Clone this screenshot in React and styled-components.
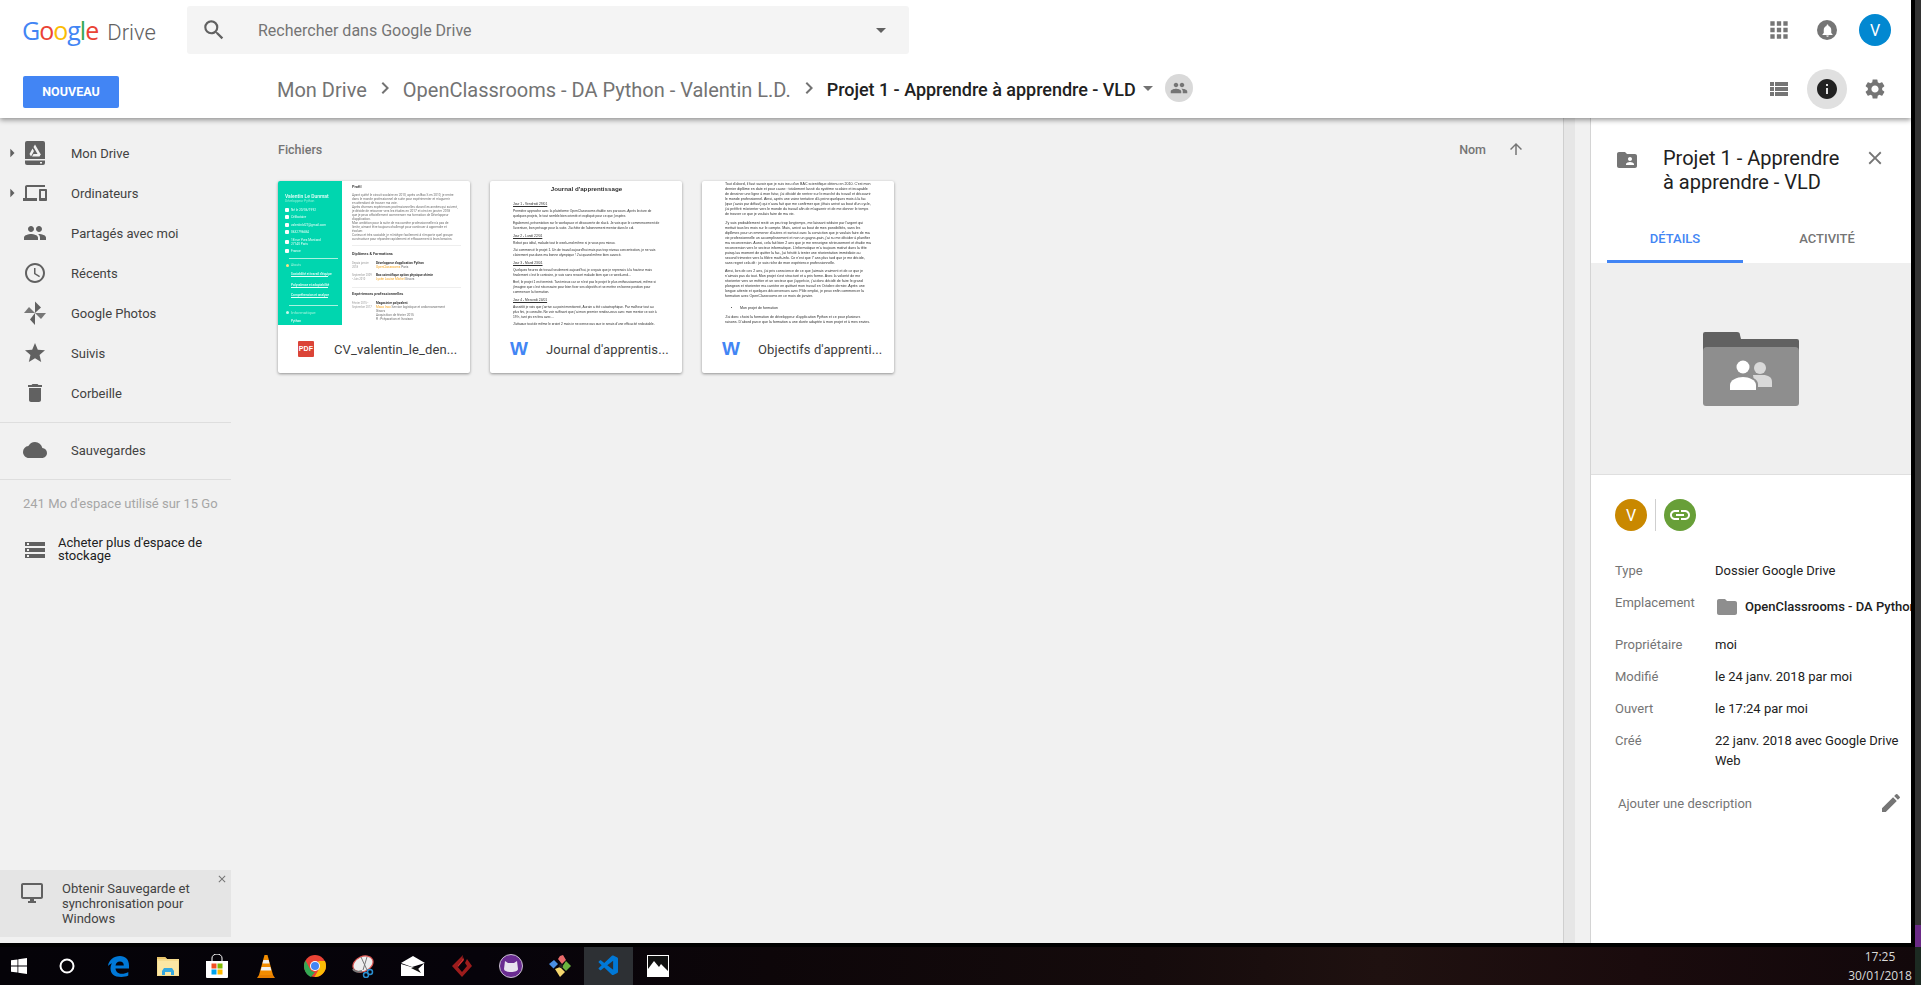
import React from "react";
import styled, { createGlobalStyle } from "styled-components";
import {
  MdSearch,
  MdArrowDropDown,
  MdPeople,
  MdApps,
  MdNotifications,
  MdViewList,
  MdInfo,
  MdSettings,
  MdClose,
  MdEdit,
  MdFolderShared,
  MdLink,
  MdFolder,
  MdAccessTime,
  MdStar,
  MdDelete,
  MdCloud,
  MdStorage,
  MdOutlineDesktopWindows,
  MdDevices,
  MdChevronRight,
  MdArrowUpward,
  MdArrowRight,
} from "react-icons/md";
import { VscVscode } from "react-icons/vsc";

const GlobalStyle = createGlobalStyle`
  html, body {
    margin: 0;
    padding: 0;
    background: #000;
    font-family: Roboto, "Liberation Sans", sans-serif;
  }
  * {
    box-sizing: border-box;
  }
`;

/* --- little drawings that no icon package has --- */

const DriveDiskIcon = () => (
  <svg width="20" height="24" viewBox="0 0 20 24">
    <path d="M2 0h16a2 2 0 0 1 2 2v16H0V2a2 2 0 0 1 2-2z" fill="#616161" />
    <path d="M0 19.5h20V22a2 2 0 0 1-2 2H2a2 2 0 0 1-2-2z" fill="#616161" />
    <rect x="15" y="21" width="2" height="1.5" fill="#f1f1f1" />
    <path d="M10 3.5l5.5 9.5h-3l-4-7z" fill="#f1f1f1" />
    <path d="M7.5 7.5L4.5 13l1.5 2.5 3-5.5z" fill="#f1f1f1" />
    <path d="M7 15.5h7.5L16 13H8.5z" fill="#f1f1f1" />
  </svg>
);

const PhotosIcon = () => (
  <svg width="22" height="24" viewBox="0 0 22 24" fill="#616161">
    <path d="M11 0.5l6 6-6 5.5z" />
    <path d="M22 12l-5 6-6-6z" opacity="0.85" />
    <path d="M11 24l-5-5.500 5-6.500z" />
    <path d="M0 12l5-6 6 6z" opacity="0.85" />
  </svg>
);

const FolderPreview = () => (
  <svg width="96" height="74" viewBox="0 0 96 74">
    <path d="M2 0h32c2 0 3 1 3 3l1 4h56a2 2 0 0 1 2 2v30H0V2a2 2 0 0 1 2-2z" fill="#616161" />
    <path d="M4 15h88a4 4 0 0 1 4 4v52a3 3 0 0 1-3 3H3a3 3 0 0 1-3-3V19a4 4 0 0 1 4-4z" fill="#8e8e8e" />
    <circle cx="57" cy="36" r="6" fill="#d9d9d9" />
    <path d="M50 43h10c5 0 9 2 9 7v5H52z" fill="#d9d9d9" />
    <path d="M25 60v-8c0-5 8-8.500 15-8.500s15 3.500 15 8.500v8z" fill="#8e8e8e" />
    <circle cx="40" cy="35" r="6.500" fill="#fff" />
    <path d="M27 58v-5c0-5 7-8 13-8s13 3 13 8v5z" fill="#fff" />
  </svg>
);

const WindowsLogo = () => (
  <svg width="16" height="16" viewBox="0 0 16 16" fill="#fff">
    <path d="M0 2.300l6.500-.9v6.200H0zM7.300 1.300L16 0v7.600H7.300zM0 8.400h6.500v6.200L0 13.700zM7.300 8.400H16V16l-8.700-1.200z" />
  </svg>
);

const CortanaRing = () => (
  <svg width="16" height="16" viewBox="0 0 16 16">
    <circle cx="8" cy="8" r="6.500" fill="none" stroke="#fff" strokeWidth="2" />
  </svg>
);

const EdgeLogo = () => (
  <svg width="21" height="21" viewBox="0 0 21 21">
    <path
      d="M0 10C.6 4 6 0 12 0c5.500 0 9 3.500 9 9.500v3H7.500c.3 3.500 3 5.300 6.300 5.300 2.300 0 4.700-.6 6.500-1.800v3.600c-1.900 1-4.400 1.400-7 1.400C6 21 2.500 17.500 2.500 12.500c0-2 .5-3.800 1.500-5.200C2.500 8 1 9 0 10zM7.500 9.500h8.300c0-2.500-1.500-4-3.900-4-2.300 0-3.900 1.600-4.400 4z"
      fill="#0078d7"
    />
  </svg>
);

const ExplorerLogo = () => (
  <svg width="22" height="20" viewBox="0 0 22 20">
    <path d="M0 1h8l2 2h12v17H0z" fill="#f6dc8f" />
    <path d="M0 1h8l2 2H0z" fill="#e9c46a" />
    <rect x="1" y="5" width="20" height="14" fill="#fbe7a4" />
    <path d="M5 19v-4l2-3h8l2 3v4h-3v-3H8v3z" fill="#35a9e0" />
  </svg>
);

const StoreLogo = () => (
  <svg width="24" height="24" viewBox="0 0 24 24">
    <path d="M7 7V4a5 4 0 0 1 10 0v3" fill="none" stroke="#fff" strokeWidth="1" />
    <path d="M1 7h22v16a1 1 0 0 1-1 1H2a1 1 0 0 1-1-1z" fill="#fff" />
    <rect x="6.500" y="9.500" width="5" height="5" fill="#f25022" />
    <rect x="12.500" y="9.500" width="5" height="5" fill="#7fba00" />
    <rect x="6.500" y="15.500" width="5" height="5" fill="#00a4ef" />
    <rect x="12.500" y="15.500" width="5" height="5" fill="#ffb900" />
  </svg>
);

const VlcLogo = () => (
  <svg width="20" height="23" viewBox="0 0 20 23">
    <path d="M1 23l2-3h14l2 3z" fill="#e67e00" />
    <path d="M3 20L8.500 0h3L17 20z" fill="#f28c00" />
    <path d="M7.300 5h5.400l.8 3.500H6.500zM5.600 12h8.800l.9 3.500H4.700z" fill="#f2f2f2" />
  </svg>
);

const ChromeLogo = () => (
  <svg width="22" height="22" viewBox="0 0 22 22">
    <circle cx="11" cy="11" r="11" fill="#ea4335" />
    <path d="M1.500 5.500L6 14c1 2 3 3 5 3l-4 5C3 20.500 0 16 0 11c0-2 .5-4 1.500-5.500z" fill="#34a853" />
    <path d="M11 6h10c.7 1.500 1 3.200 1 5 0 6-5 11-11 11h-.5L15 14c1-2 .8-5.500-1-8z" fill="#fbbc05" />
    <circle cx="11" cy="11" r="5" fill="#fff" />
    <circle cx="11" cy="11" r="4" fill="#4285f4" />
  </svg>
);

const SnipLogo = () => (
  <svg width="24" height="24" viewBox="0 0 24 24">
    <ellipse cx="11" cy="10" rx="10.500" ry="7.500" transform="rotate(-25 11 10)" fill="#eee" stroke="#d9534f" strokeWidth="1.200" />
    <path d="M1 15c2 3 6 3 9 2" fill="none" stroke="#777" strokeWidth="2" />
    <path d="M9 3l6 13M15 3l-4 13" stroke="#777" strokeWidth="1" />
    <circle cx="18" cy="18" r="2.500" fill="none" stroke="#2a8fd0" strokeWidth="1.500" />
    <circle cx="14" cy="21" r="2.500" fill="none" stroke="#2a8fd0" strokeWidth="1.500" />
  </svg>
);

const MailLogo = () => (
  <svg width="24" height="20" viewBox="0 0 24 20">
    <path d="M0 7L12 0l12 7-13 4z" fill="#fff" />
    <path d="M0 8l17 5 6-5.500V20H0z" fill="#fff" />
    <path d="M10 12l10 5-4-6z" fill="#111" />
  </svg>
);

const RedLogo = () => (
  <svg width="20" height="22" viewBox="0 0 20 22">
    <path d="M11 0l-1 5-5 6 5 6 5-6-2-3 2-4 5 7-10 11L0 11z" fill="#9c1c1c" />
    <path d="M11 2l-1 3-5 6 1 1 6-7z" fill="#d32f2f" />
  </svg>
);

const PurpleLogo = () => (
  <svg width="24" height="24" viewBox="0 0 24 24">
    <circle cx="12" cy="12" r="11.500" fill="#6a2c91" stroke="#c9c2d0" strokeWidth="1" />
    <path d="M6 7l3 2h6l3-2 1 8c0 2-3 3-7 3s-7-1-7-3z" fill="#e8e3ee" />
  </svg>
);

const DiamondsLogo = () => (
  <svg width="24" height="24" viewBox="0 0 24 24">
    <path d="M6 6l4 4-4.500 4.500L1 10z" fill="#4a90e2" />
    <path d="M12 2l3-1 3 5-4 4-4-5z" fill="#e96a6a" />
    <path d="M18 7l5 5-5 5-4-4z" fill="#6cb33f" />
    <path d="M7 15l5-2 5 5-5 5z" fill="#f5d76e" />
    <circle cx="13" cy="12" r="2" fill="#222" />
  </svg>
);

const PhotoLogo = () => (
  <svg width="22" height="22" viewBox="0 0 22 22">
    <rect x="0.500" y="0.500" width="21" height="21" fill="#111" stroke="#fff" />
    <path d="M1 21V14l6-8 5 6 2-3 7 7v5z" fill="#fff" />
  </svg>
);

/* --- page frame --- */

const Page = styled.div`
  width: 1921px;
  height: 985px;
  display: flex;
  flex-direction: column;
  overflow: hidden;
  background: #000;
`;

const Desktop = styled.div`
  height: 947px;
  display: flex;
`;

const Window = styled.div`
  width: 1911px;
  height: 943px;
  display: flex;
  flex-direction: column;
  background: #f1f1f1;
`;

const Wallpaper = styled.div`
  width: 6px;
  height: 947px;
  margin-left: 4px;
  background: linear-gradient(180deg, #333 0, #333 925px, #6a2a86 925px);
`;

/* --- header --- */

const Header = styled.header`
  height: 118px;
  flex: none;
  background: #fff;
  box-shadow: 0 2px 5px rgba(0, 0, 0, 0.4);
  position: relative;
  z-index: 2;
`;

const HeaderRow = styled.div`
  height: ${(p) => p.$height}px;
  display: flex;
  align-items: center;
  padding-right: 12px;
`;

const Logo = styled.div`
  width: 187px;
  padding-left: 22px;
  flex: none;
  display: flex;
  align-items: baseline;
  white-space: nowrap;
`;

const GoogleWord = styled.span`
  font-family: "Open Sans", Roboto, sans-serif;
  font-size: 25px;
  letter-spacing: -1px;
  line-height: 32px;
`;

const LogoLetter = styled.span`
  color: ${(p) => p.$color};
`;

const DriveWord = styled.span`
  margin-left: 9px;
  font-size: 22px;
  font-weight: 300;
  color: #616161;
`;

const SearchBox = styled.div`
  width: 722px;
  height: 48px;
  flex: none;
  display: flex;
  align-items: center;
  background: #f4f4f4;
  border-radius: 3px;
  color: #616161;
  padding: 0 16px 0 14px;
`;

const SearchText = styled.span`
  flex: 1;
  margin-left: 31px;
  font-size: 16px;
  color: #757575;
`;

const IconGroup = styled.div`
  margin-left: auto;
  display: flex;
`;

const IconSlot = styled.div`
  width: 48px;
  height: 48px;
  display: flex;
  align-items: center;
  justify-content: center;
  color: ${(p) => p.$color || "#757575"};
`;

const Bell = styled.div`
  width: 20px;
  height: 20px;
  border-radius: 50%;
  background: #757575;
  color: #fff;
  display: flex;
  align-items: center;
  justify-content: center;
`;

const Avatar = styled.div`
  width: 32px;
  height: 32px;
  border-radius: 50%;
  background: ${(p) => p.$bg};
  color: #fff;
  font-size: 16px;
  display: flex;
  align-items: center;
  justify-content: center;
`;

const InfoHalo = styled.div`
  width: 40px;
  height: 40px;
  border-radius: 50%;
  background: #e0e0e0;
  color: #212121;
  display: flex;
  align-items: center;
  justify-content: center;
`;

const ActionArea = styled.div`
  width: 277px;
  flex: none;
  padding-left: 23px;
  padding-top: 5px;
`;

const NewButton = styled.button`
  width: 96px;
  height: 32px;
  border: 0;
  border-radius: 2px;
  background: #4285f4;
  color: #fff;
  font-family: Roboto, sans-serif;
  font-size: 12.500px;
  font-weight: 700;
  display: block;
`;

const Breadcrumb = styled.nav`
  display: flex;
  align-items: center;
  gap: 6px;
  color: #737373;
  white-space: nowrap;
  margin-top: -2px;
`;

const Crumb = styled.span`
  font-size: 20px;
  margin-top: 3px;
`;

const CurrentCrumb = styled.span`
  font-size: 18px;
  font-weight: 500;
  letter-spacing: -0.03px;
  color: #212121;
  margin-top: 3px;
`;

const CrumbMenu = styled.span`
  display: flex;
  margin-left: -6px;
`;

const SharedBadge = styled.div`
  width: 28px;
  height: 28px;
  margin-left: -1px;
  border-radius: 50%;
  background: #d9d9d9;
  color: #757575;
  display: flex;
  align-items: center;
  justify-content: center;
`;

/* --- body --- */

const Body = styled.div`
  flex: 1;
  min-height: 0;
  display: flex;
`;

const Sidebar = styled.aside`
  width: 231px;
  flex: none;
  padding-top: 15px;
  display: flex;
  flex-direction: column;
`;

const NavRow = styled.div`
  height: 40px;
  flex: none;
  display: flex;
  align-items: center;
  font-size: 13px;
  color: #424242;
`;

const TreeArrow = styled.span`
  width: 23px;
  flex: none;
  display: flex;
  justify-content: center;
  color: #616161;
`;

const NavIcon = styled.span`
  width: 24px;
  height: 24px;
  flex: none;
  margin-right: 24px;
  display: flex;
  align-items: center;
  justify-content: center;
  color: #616161;
`;

const Divider = styled.div`
  height: 1px;
  flex: none;
  margin: ${(p) => p.$margin};
  background: #dedede;
`;

const Quota = styled.div`
  padding-left: 23px;
  margin-top: 15px;
  font-size: 13px;
  line-height: 18px;
  color: #a6a6a6;
  white-space: nowrap;
`;

const StorageLink = styled.div`
  margin-top: 22px;
  display: flex;
  align-items: center;
  padding-left: 23px;
  font-size: 13px;
  line-height: 13px;
  color: #212121;
`;

const StorageIcon = styled.span`
  width: 24px;
  flex: none;
  margin: 3px 11px 0 0;
  display: flex;
  color: #616161;
`;

const Promo = styled.div`
  margin-top: auto;
  margin-bottom: 6px;
  height: 67px;
  flex: none;
  background: #e5e5e5;
  display: flex;
  padding: 11px 0 0 20px;
  position: relative;
  font-size: 13px;
  line-height: 15px;
  color: #424242;
`;

const PromoIcon = styled.span`
  width: 24px;
  flex: none;
  margin-right: 18px;
  display: flex;
  color: #616161;
`;

const PromoClose = styled.span`
  position: absolute;
  top: 3px;
  right: 3px;
  display: flex;
  color: #757575;
`;

const Main = styled.main`
  flex: 1;
  min-width: 0;
  padding: 19px 38px 0 47px;
`;

const ListHead = styled.div`
  height: 24px;
  display: flex;
  align-items: center;
  font-size: 12.500px;
  font-weight: 500;
  color: #757575;
`;

const SortBy = styled.div`
  margin-left: auto;
  display: flex;
  align-items: center;
  gap: 21px;
`;

const Cards = styled.div`
  margin-top: 20px;
  display: flex;
  gap: 20px;
`;

const Card = styled.article`
  width: 192px;
  height: 192px;
  background: #fff;
  border-radius: 2px;
  box-shadow: 0 1px 3px rgba(0, 0, 0, 0.4);
  overflow: hidden;
`;

const Thumb = styled.div`
  height: 144px;
  overflow: hidden;
  display: flex;
  filter: blur(0.25px);
`;

const CardLabel = styled.div`
  height: 48px;
  display: flex;
  align-items: center;
  padding-left: 20px;
  font-size: 13px;
  font-weight: 400;
  letter-spacing: 0.1px;
  color: #3c3c3c;
  white-space: nowrap;
`;

const FileBadge = styled.span`
  width: 16px;
  height: 16px;
  flex: none;
  margin-right: 20px;
  border-radius: 1px;
  background: ${(p) => (p.$pdf ? "#db4437" : "transparent")};
  color: ${(p) => (p.$pdf ? "#fff" : "#4285f4")};
  font-size: ${(p) => (p.$pdf ? "7px" : "19px")};
  font-weight: 900;
  line-height: 16px;
  text-align: center;
  font-family: "Liberation Sans", sans-serif;
`;

/* --- fake document thumbnails, tiny but real text --- */

const CvSide = styled.div`
  width: 64px;
  flex: none;
  background: #00d6af;
  color: #e8fff9;
  padding: 12px 4px 0 7px;
  font-size: 3.200px;
  line-height: 4px;
`;

const CvName = styled.div`
  font-size: 5px;
  font-weight: 500;
  line-height: 6px;
  white-space: nowrap;
`;

const CvRole = styled.div`
  font-size: 3.300px;
  color: #8ff0d8;
  margin-bottom: 4.500px;
`;

const CvLine = styled.div`
  display: flex;
  align-items: center;
  gap: 2px;
  margin-top: 3.500px;
  white-space: nowrap;
  &::before {
    content: "";
    width: 4px;
    height: 4px;
    flex: none;
    border-radius: 1px;
    background: #fff;
  }
`;

const CvAddress = styled.span`
  white-space: normal;
`;

const CvSection = styled.div`
  margin: 4px 0 -1.500px 0;
  padding-left: 1px;
  color: #9df3dc;
  font-size: ${(p) => p.$size || 3.400}px;
  line-height: 5px;
  display: flex;
  align-items: center;
  gap: 2px;
  &::before {
    content: "";
    width: 3px;
    height: 3px;
    flex: none;
    border-radius: 50%;
    background: ${(p) => p.$dot};
  }
`;

const CvSkill = styled.div`
  margin: 5.500px 10px 0 6px;
  border-bottom: ${(p) => (p.$plain ? "0" : "0.800px solid #e8fff9")};
  font-weight: 500;
  white-space: nowrap;
`;

const CvRule = styled.div`
  height: 1px;
  margin: ${(p) => p.$gap || 5}px 0 0 4px;
  background: #a8f2df;
`;

const CvMain = styled.div`
  flex: 1;
  min-width: 0;
  padding: 3px 9px 0 10px;
  color: #6e6e6e;
  font-size: 3.200px;
  line-height: 4px;
  white-space: nowrap;
`;

const CvHeading = styled.div`
  color: #444;
  font-weight: 700;
  font-size: 3.900px;
  line-height: 6px;
  margin-bottom: ${(p) => p.$after || 0}px;
`;

const CvSeparator = styled.div`
  height: 1px;
  margin: ${(p) => p.$margin};
  background: #eee;
`;

const CvEntry = styled.div`
  display: flex;
  gap: 3px;
  margin-top: 4px;
`;

const CvDate = styled.div`
  width: 21px;
  flex: none;
  color: #999;
  font-size: 2.700px;
  white-space: normal;
`;

const CvStrong = styled.div`
  color: #333;
  font-weight: 700;
`;

const CvOrange = styled.span`
  color: #f5a623;
`;

const DocPage = styled.div`
  flex: 1;
  padding: ${(p) => p.$padding};
  color: #2e2e2e;
  font-family: "Liberation Sans", sans-serif;
  font-size: ${(p) => p.$size}px;
  line-height: 5px;
  min-width: 0;
`;

const DocTitle = styled.div`
  font-size: 6.200px;
  font-weight: 700;
  text-align: center;
  line-height: 9px;
  margin: 3px 0 8.500px;
  white-space: nowrap;
`;

const DocHead = styled.div`
  text-decoration: underline;
  margin-bottom: 2px;
`;

const DocPara = styled.p`
  margin: 0 0 ${(p) => p.$gap || 2.500}px;
`;

const DocBullet = styled.div`
  margin: 7px 0 4px 15px;
  display: list-item;
  list-style: disc;
`;

/* --- details panel --- */

const Scroller = styled.div`
  width: 27px;
  flex: none;
  border-left: 1px solid #cfcfcf;
  background: linear-gradient(90deg, #e6e6e6 0, #e6e6e6 11px, #f1f1f1 11px);
`;

const Panel = styled.section`
  width: 321px;
  flex: none;
  background: #fff;
  border-left: 1px solid #d4d4d4;
  overflow: hidden;
`;

const PanelHead = styled.div`
  height: 97px;
  padding: 28px 24px 0;
  display: flex;
  align-items: flex-start;
  color: #757575;
`;

const PanelIcon = styled.span`
  width: 24px;
  height: 24px;
  margin: 2px 24px 0 0;
  flex: none;
  display: flex;
`;

const PanelTitle = styled.h2`
  width: 190px;
  margin: 0;
  font-size: 20px;
  font-weight: 400;
  line-height: 24px;
  color: #212121;
`;

const PanelClose = styled.span`
  margin-left: auto;
  width: 24px;
  height: 24px;
  flex: none;
  display: flex;
  align-items: center;
  justify-content: center;
`;

const Tabs = styled.div`
  display: flex;
  gap: 16px;
  padding: 0 16px;
`;

const Tab = styled.div`
  width: 136px;
  height: 48px;
  padding-top: 1px;
  border-bottom: 3px solid ${(p) => (p.$active ? "#4285f4" : "transparent")};
  display: flex;
  align-items: center;
  justify-content: center;
  font-size: 13px;
  font-weight: 500;
  color: ${(p) => (p.$active ? "#4285f4" : "#757575")};
`;

const Preview = styled.div`
  height: 212px;
  background: #efefef;
  border-bottom: 1px solid #dfdfdf;
  display: flex;
  align-items: center;
  justify-content: center;
`;

const Sharing = styled.div`
  display: flex;
  align-items: center;
  padding: 24px 0 0 24px;
`;

const Separator = styled.div`
  width: 1px;
  height: 32px;
  margin: 0 8px;
  background: #cfcfcf;
`;

const DetailList = styled.div`
  padding: 30px 8px 0 24px;
  display: flex;
  flex-direction: column;
  gap: 12px;
  font-size: 13px;
  line-height: 20px;
`;

const DetailRow = styled.div`
  display: flex;
  min-height: ${(p) => p.$minHeight || 20}px;
`;

const DetailLabel = styled.div`
  width: 100px;
  flex: none;
  color: #757575;
`;

const DetailValue = styled.div`
  color: #212121;
`;

const LocationValue = styled.div`
  display: flex;
  align-items: center;
  height: 20px;
  margin-top: 4px;
  color: #212121;
  font-weight: 500;
  white-space: nowrap;
`;

const LocationIcon = styled.span`
  display: flex;
  margin: 0 6px 0 0;
  color: #8e8e8e;
`;

const DescriptionRow = styled.div`
  margin-top: 22px;
  padding: 0 8px 0 27px;
  height: 20px;
  display: flex;
  align-items: center;
  justify-content: space-between;
  font-size: 13px;
  color: #757575;
`;

/* --- taskbar --- */

const Taskbar = styled.footer`
  height: 38px;
  flex: none;
  display: flex;
  align-items: stretch;
  background: linear-gradient(
    90deg,
    #050308 0,
    #06030a 480px,
    #0d0609 770px,
    #150b0c 1150px,
    #1f1110 1380px,
    #1a0b0d 1640px,
    #12080b 1915px,
    #1c2a22 1915px
  );
`;

const TaskSlot = styled.div`
  width: ${(p) => p.$width || 49}px;
  margin-left: ${(p) => p.$offset || 0}px;
  display: flex;
  align-items: center;
  justify-content: center;
  background: ${(p) => (p.$active ? "#2d3034" : "transparent")};
  color: #0078d7;
`;

const Clock = styled.div`
  margin-left: auto;
  width: 70px;
  margin-right: 6px;
  display: flex;
  flex-direction: column;
  justify-content: center;
  align-items: center;
  color: #d9d9d9;
  font-family: "Open Sans", sans-serif;
  font-size: 12px;
  line-height: 19px;
  white-space: nowrap;
`;

const navItems = [
  { label: "Mon Drive", icon: <DriveDiskIcon />, tree: true },
  { label: "Ordinateurs", icon: <MdDevices size={24} />, tree: true },
  { label: "Partagés avec moi", icon: <MdPeople size={24} /> },
  { label: "Récents", icon: <MdAccessTime size={26} /> },
  { label: "Google Photos", icon: <PhotosIcon /> },
  { label: "Suivis", icon: <MdStar size={24} /> },
  { label: "Corbeille", icon: <MdDelete size={24} /> },
];

const details = [
  { label: "Propriétaire", value: "moi" },
  { label: "Modifié", value: "le 24 janv. 2018 par moi" },
  { label: "Ouvert", value: "le 17:24 par moi" },
  { label: "Créé", value: "22 janv. 2018 avec Google Drive Web" },
];

const taskIcons = [
  <EdgeLogo />,
  <ExplorerLogo />,
  <StoreLogo />,
  <VlcLogo />,
  <ChromeLogo />,
  <SnipLogo />,
  <MailLogo />,
  <RedLogo />,
  <PurpleLogo />,
  <DiamondsLogo />,
];

const CvThumb = () => (
  <Thumb>
    <CvSide>
      <CvName>Valentin Le Dunmat</CvName>
      <CvRole>Développeur Python</CvRole>
      <CvLine>Né le 20/06/1992</CvLine>
      <CvLine>Célibataire</CvLine>
      <CvLine>valentinld27@gmail.com</CvLine>
      <CvLine>0632796684</CvLine>
      <CvLine>
        <CvAddress>
          18 rue Yves Montand
          <br />
          27140 Paris
        </CvAddress>
      </CvLine>
      <CvLine>France</CvLine>
      <CvRule />
      <CvSection $dot="#ffe082">Atouts</CvSection>
      <CvSkill>Sociabilité et travail d'équipe</CvSkill>
      <CvSkill>Polyvalence et adaptabilité</CvSkill>
      <CvSkill>Compréhension et analyse</CvSkill>
      <CvRule $gap={7} />
      <CvSection $dot="#c8f7ea" $size={4.300}>Informatique</CvSection>
      <CvSkill $plain>Python</CvSkill>
    </CvSide>
    <CvMain>
      <CvHeading $after={3}>Profil</CvHeading>
      Ayant quitté le circuit scolaire en 2010, après un Bac S en 2010, je rentre
      <br />
      dans le monde professionnel de suite pour expérimenter et m'aguerrir
      <br />
      en attendant de trouver ma voie.
      <br />
      Après diverses expériences professionnelles durant les années qui suivent,
      <br />
      je décide de retourner vers les études en 2017 et c'est en janvier 2018
      <br />
      que je peux officiellement commencer ma formation de Développeur
      <br />
      d'application.
      <br />
      Mon ambition pour la suite de ma carrière professionnelle n'a pas de
      <br />
      limite, aimant être toujours challengé pour continuer à apprendre et
      <br />
      évoluer.
      <br />
      Curieux et très sociable, je m'intègre facilement à n'importe quel groupe
      <br />
      ou structure pour répondre rapidement et efficacement à leurs besoins.
      <CvSeparator $margin="4px 0 5px" />
      <CvHeading>Diplômes & Formations</CvHeading>
      <CvEntry>
        <CvDate>Depuis janvier 2018</CvDate>
        <div>
          <CvStrong>Développeur d'application Python</CvStrong>
          <CvOrange>OpenClassrooms</CvOrange> Paris
        </div>
      </CvEntry>
      <CvEntry>
        <CvDate>Septembre 2009 - Juin 2010</CvDate>
        <div>
          <CvStrong>Bac scientifique option physique chimie</CvStrong>
          <CvOrange>Lycée Louise Michel</CvOrange> Gisors
        </div>
      </CvEntry>
      <CvSeparator $margin="6px 0 3px" />
      <CvHeading>Expériences professionnelles</CvHeading>
      <CvEntry>
        <CvDate>Février 2015 - Septembre 2017</CvDate>
        <div>
          <CvStrong>Magasinier polyvalent</CvStrong>
          <CvOrange>Maco Inox</CvOrange> Service logistique et ordonnancement
          <br />
          Gisors
          <br />
          Acquisition de février 2015
          <br />
          R : Préparation et livraison
        </div>
      </CvEntry>
    </CvMain>
  </Thumb>
);

const JournalThumb = () => (
  <Thumb>
    <DocPage $padding="0 22px 0 23px" $size={3.300}>
      <DocTitle>Journal d'apprentissage</DocTitle>
      <DocHead>Jour 1 - Vendredi 29/01</DocHead>
      <DocPara>
        Première approche avec la plateforme OpenClassrooms établie ses parcours. Après lecture de
        quelques projets, le tout semble bien orienté et expliqué pour ce que j'espère.
      </DocPara>
      <DocPara>
        Egalement, présentation sur le workspace et découverte de slack. Je vois que le commencement
        de l'aventure, bon présage pour la suite. J'achète de l'abonnement mentor dans le cdi.
      </DocPara>
      <DocHead>Jour 2 - Lundi 22/01</DocHead>
      <DocPara>Rebot pas idéal, malade tout le week-end même si je vous peu mieux.</DocPara>
      <DocPara>
        J'ai commencé le projet 1. Un de travail aujourd'hui mais pas trop niveau concentration, je
        ne vais clairement pas dans ma bonne olympique ! J'ai quand même bien avancé.
      </DocPara>
      <DocHead>Jour 3 - Mardi 23/01</DocHead>
      <DocPara>
        Quelques heures de travail seulement aujourd'hui, je croyais que je reprenais à la hauteur
        mais finalement c'est le contraire, je suis sans ressort malade bien que ce week-end...
      </DocPara>
      <DocPara>
        Bref, le projet 1 est terminé. Tant mieux car ce n'est pas le projet le plus enthousiasmant,
        même si j'imagine que c'est nécessaire pour bien fixer ses objectifs et se mettre en bonne
        position pour commencer la formation.
      </DocPara>
      <DocHead>Jour 4 - Mercredi 24/01</DocHead>
      <DocPara>
        Aussitôt je vois que j'arrive au point mentionné, Aurain a été catastrophique. Par
        malheur tout au plus fini, je consulte. Ne voir suffisant que j'ai mon premier rendez-vous
        avec mon mentor ce soir à 19 h, tant pis en fera avec...
      </DocPara>
      <DocPara>J'attaque tout de même le projet 2 mais je ne pense pas que je serais d'une efficacité redoutable.</DocPara>
    </DocPage>
  </Thumb>
);

const ObjectivesThumb = () => (
  <Thumb>
    <DocPage $padding="1px 22px 0 23px" $size={3.600}>
      <DocPara $gap={3.500}>
        Tout d'abord, il faut savoir que je suis issu d'un BAC scientifique obtenu en 2010. C'est
        mon dernier diplôme en date et pour cause : totalement lassé du système scolaire et incapable
        de dessiner une ligne à mon futur, j'ai décidé de rentrer sur le marché du travail et découvrir
        le monde professionnel. Ainsi, après une vaine tentative d'à peine quelques mois à la fac
        (que j'avais par défaut) qui n'aura fait que me confirmer que j'étais arrivé au bout d'un
        cycle, j'ai préféré m'orienter vers le monde du travail afin de m'aguerrir et de me donner
        le temps de trouver ce que je voulais faire de ma vie.
      </DocPara>
      <DocPara $gap={3.500}>
        J'y suis probablement resté un peu trop longtemps, me laissant séduire par l'argent qui mettait
        tous les mois sur le compte. Mais, arrivé au bout de mes possibilités, sans les diplômes pour
        un emmener d'autres et surtout avec la conviction que je voulais faire de ma vie
        professionnelle un accomplissement et non un gagne-pain, j'ai su me décider à planifier ma
        reconversion. Aussi, cela fait bien 2 ans que je me renseigne sérieusement et étudie ma
        reconversion vers le secteur informatique. L'informatique m'a toujours motivé dans la tête
        puisqu'au moment de quitter la fac, j'ai hésité à tenter une réorientation immédiate au
        second trimestre vers la filière math-info. Ce n'est que 7 ans plus tard que je me décide,
        sans regret cela dit : je suis riche de mon expérience professionnelle.
      </DocPara>
      <DocPara $gap={3.500}>
        Ainsi, lors de ces 2 ans, j'ai pris conscience de ce que j'aimais vraiment et de ce que je
        n'aimais pas du tout. Mon projet s'est structuré et a pris forme. Avec la volonté de me
        réorienter vers un métier et un secteur que j'apprécie, j'ai donc décidé de faire le grand
        plongeon et réorienter ma carrière en quittant mon travail en Octobre dernier. Après une
        longue attente et quelques déconvenues avec Pôle emploi, je peux enfin commencer la
        formation avec OpenClassrooms en ce mois de janvier.
      </DocPara>
      <DocBullet>Mon projet de formation</DocBullet>
      <DocPara>
        J'ai donc choisi la formation de développeur d'application Python et ce pour plusieurs
        raisons. D'abord parce que la formation a une durée adaptée à mon projet et à mes envies.
      </DocPara>
    </DocPage>
  </Thumb>
);

const App = () => {
  return (
    <Page>
      <GlobalStyle />
      <Desktop>
        <Window>
          <Header>
            <HeaderRow $height={60}>
              <Logo>
                <GoogleWord>
                  <LogoLetter $color="#4285f4">G</LogoLetter>
                  <LogoLetter $color="#ea4335">o</LogoLetter>
                  <LogoLetter $color="#fbbc05">o</LogoLetter>
                  <LogoLetter $color="#4285f4">g</LogoLetter>
                  <LogoLetter $color="#34a853">l</LogoLetter>
                  <LogoLetter $color="#ea4335">e</LogoLetter>
                </GoogleWord>
                <DriveWord>Drive</DriveWord>
              </Logo>
              <SearchBox>
                <MdSearch size={26} />
                <SearchText>Rechercher dans Google Drive</SearchText>
                <MdArrowDropDown size={24} />
              </SearchBox>
              <IconGroup>
                <IconSlot><MdApps size={26} /></IconSlot>
                <IconSlot>
                  <Bell><MdNotifications size={15} /></Bell>
                </IconSlot>
                <IconSlot><Avatar $bg="#0288d1">V</Avatar></IconSlot>
              </IconGroup>
            </HeaderRow>
            <HeaderRow $height={58}>
              <ActionArea>
                <NewButton>NOUVEAU</NewButton>
              </ActionArea>
              <Breadcrumb>
                <Crumb>Mon Drive</Crumb>
                <MdChevronRight size={24} />
                <Crumb>OpenClassrooms - DA Python - Valentin L.D.</Crumb>
                <MdChevronRight size={24} />
                <CurrentCrumb>Projet 1 - Apprendre à apprendre - VLD</CurrentCrumb>
                <CrumbMenu><MdArrowDropDown size={24} /></CrumbMenu>
                <SharedBadge><MdPeople size={18} /></SharedBadge>
              </Breadcrumb>
              <IconGroup>
                <IconSlot><MdViewList size={24} /></IconSlot>
                <IconSlot>
                  <InfoHalo><MdInfo size={24} /></InfoHalo>
                </IconSlot>
                <IconSlot><MdSettings size={24} /></IconSlot>
              </IconGroup>
            </HeaderRow>
          </Header>

          <Body>
            <Sidebar>
              {navItems.map(({ label, icon, tree }) => (
                <NavRow key={label}>
                  <TreeArrow>{tree && <MdArrowRight size={20} />}</TreeArrow>
                  <NavIcon>{icon}</NavIcon>
                  {label}
                </NavRow>
              ))}
              <Divider $margin="9px 0 7px" />
              <NavRow>
                <TreeArrow />
                <NavIcon><MdCloud size={24} /></NavIcon>
                Sauvegardes
              </NavRow>
              <Divider $margin="9px 0 0" />
              <Quota>241 Mo d'espace utilisé sur 15 Go</Quota>
              <StorageLink>
                <StorageIcon><MdStorage size={24} /></StorageIcon>
                <span>
                  Acheter plus d'espace de
                  <br />
                  stockage
                </span>
              </StorageLink>
              <Promo>
                <PromoIcon><MdOutlineDesktopWindows size={24} /></PromoIcon>
                <span>
                  Obtenir Sauvegarde et
                  <br />
                  synchronisation pour
                  <br />
                  Windows
                </span>
                <PromoClose><MdClose size={12} /></PromoClose>
              </Promo>
            </Sidebar>

            <Main>
              <ListHead>
                Fichiers
                <SortBy>
                  Nom
                  <MdArrowUpward size={18} />
                </SortBy>
              </ListHead>
              <Cards>
                <Card>
                  <CvThumb />
                  <CardLabel>
                    <FileBadge $pdf>PDF</FileBadge>
                    CV_valentin_le_den...
                  </CardLabel>
                </Card>
                <Card>
                  <JournalThumb />
                  <CardLabel>
                    <FileBadge>W</FileBadge>
                    Journal d'apprentis...
                  </CardLabel>
                </Card>
                <Card>
                  <ObjectivesThumb />
                  <CardLabel>
                    <FileBadge>W</FileBadge>
                    Objectifs d'apprenti...
                  </CardLabel>
                </Card>
              </Cards>
            </Main>

            <Scroller />

            <Panel>
              <PanelHead>
                <PanelIcon><MdFolderShared size={24} /></PanelIcon>
                <PanelTitle>Projet 1 - Apprendre à apprendre - VLD</PanelTitle>
                <PanelClose><MdClose size={22} /></PanelClose>
              </PanelHead>
              <Tabs>
                <Tab $active>DÉTAILS</Tab>
                <Tab>ACTIVITÉ</Tab>
              </Tabs>
              <Preview>
                <FolderPreview />
              </Preview>
              <Sharing>
                <Avatar $bg="#c98800">V</Avatar>
                <Separator />
                <Avatar $bg="#689f38"><MdLink size={24} /></Avatar>
              </Sharing>
              <DetailList>
                <DetailRow>
                  <DetailLabel>Type</DetailLabel>
                  <DetailValue>Dossier Google Drive</DetailValue>
                </DetailRow>
                <DetailRow $minHeight={30}>
                  <DetailLabel>Emplacement</DetailLabel>
                  <LocationValue>
                    <LocationIcon><MdFolder size={24} /></LocationIcon>
                    OpenClassrooms - DA Python - Valentin L.D.
                  </LocationValue>
                </DetailRow>
                {details.map(({ label, value }) => (
                  <DetailRow key={label}>
                    <DetailLabel>{label}</DetailLabel>
                    <DetailValue>{value}</DetailValue>
                  </DetailRow>
                ))}
              </DetailList>
              <DescriptionRow>
                Ajouter une description
                <MdEdit size={24} />
              </DescriptionRow>
            </Panel>
          </Body>
        </Window>
        <Wallpaper />
      </Desktop>

      <Taskbar>
        <TaskSlot $width={38}><WindowsLogo /></TaskSlot>
        <TaskSlot $width={58}><CortanaRing /></TaskSlot>
        {taskIcons.map((icon, i) => (
          <TaskSlot key={i} $offset={i === 0 ? -2 : 0}>{icon}</TaskSlot>
        ))}
        <TaskSlot $active><VscVscode size={24} /></TaskSlot>
        <TaskSlot><PhotoLogo /></TaskSlot>
        <Clock>
          <span>17:25</span>
          <span>30/01/2018</span>
        </Clock>
      </Taskbar>
    </Page>
  );
};

export default App;
